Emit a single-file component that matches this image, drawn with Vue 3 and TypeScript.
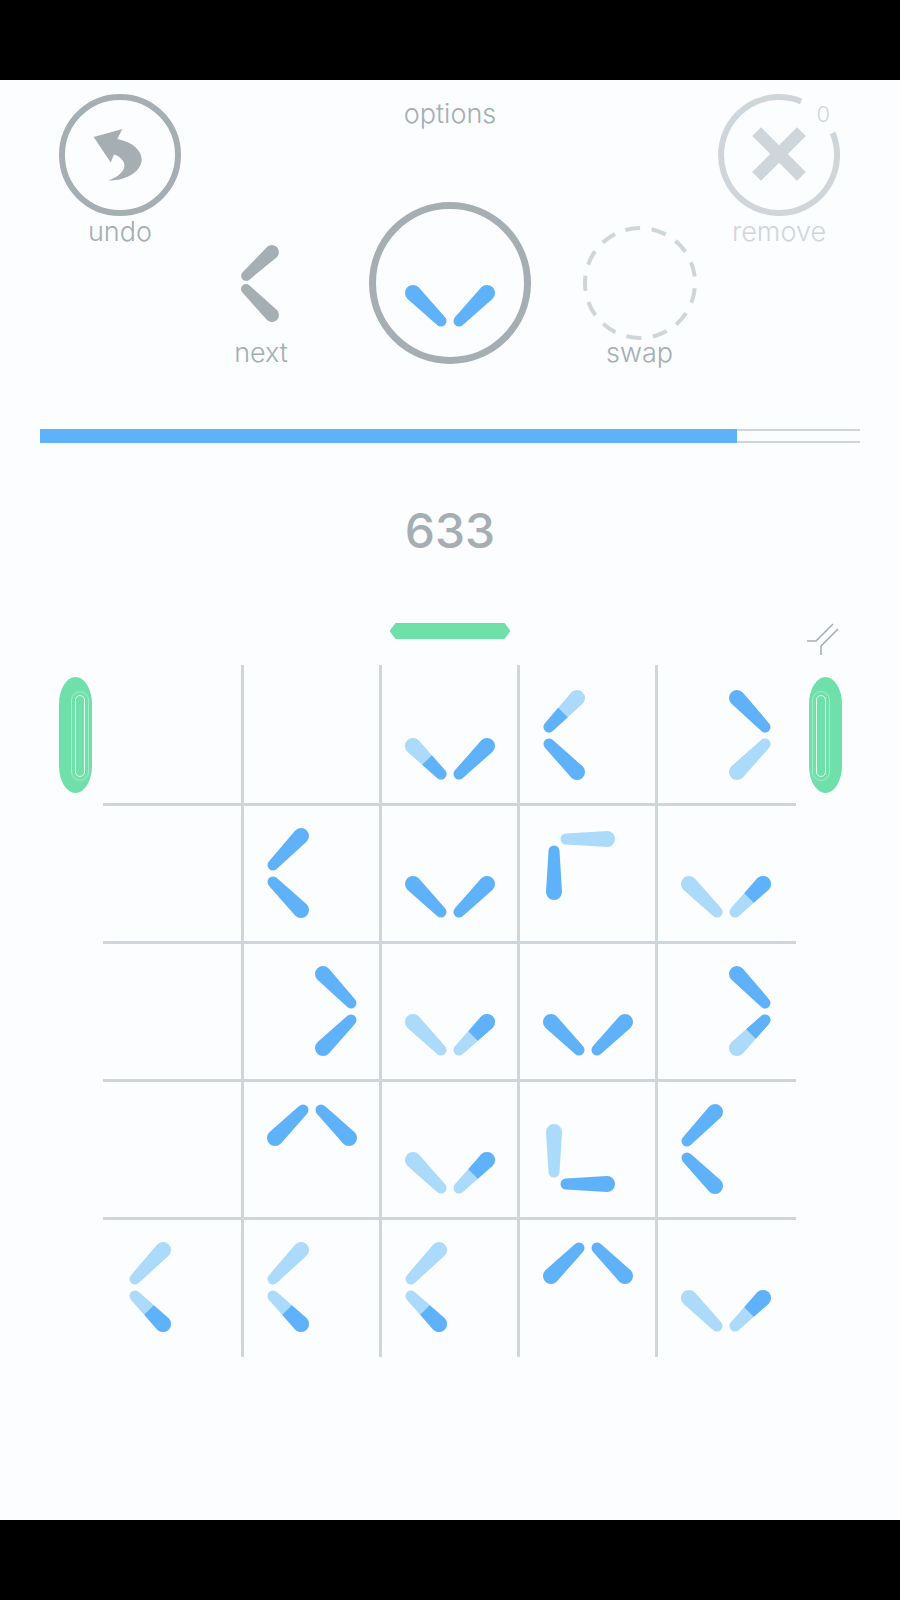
<script setup lang="ts">
type Point = [number, number]
type Tone = 'dark' | 'light' | 'smallDark' | 'bigDark'
type ShapeName = 'left' | 'right' | 'down' | 'up' | 'cornerTop' | 'cornerBottom'

const DARK = '#5fb2fa'
const LIGHT = '#abdafb'

// every stroke runs from its thin end to its thick end
const shapes: Record<ShapeName, [Point, Point][]> = {
  left: [[[30, 61], [58, 32]], [[30, 78], [58, 106]]],
  right: [[[108, 61], [80, 32]], [[108, 78], [80, 106]]],
  down: [[[60, 108], [32, 80]], [[78, 108], [106, 80]]],
  up: [[[60, 30], [32, 58]], [[78, 30], [106, 58]]],
  cornerTop: [[[35, 47], [35, 88]], [[47, 35], [88, 35]]],
  cornerBottom: [[[35, 92], [35, 52]], [[47, 104], [88, 104]]],
}

function taper(a: Point, ra: number, b: Point, rb: number, round = true) {
  const len = Math.hypot(b[0] - a[0], b[1] - a[1])
  const nx = -(b[1] - a[1]) / len
  const ny = (b[0] - a[0]) / len
  const p = (q: Point, r: number, s: number) => `${(q[0] + nx * r * s).toFixed(2)} ${(q[1] + ny * r * s).toFixed(2)}`
  const tail = round ? `A${ra} ${ra} 0 0 0 ${p(a, ra, 1)}` : ''
  return `M${p(a, ra, 1)}L${p(b, rb, 1)}A${rb} ${rb} 0 0 0 ${p(b, rb, -1)}L${p(a, ra, -1)}${tail}Z`
}

function strokePaths(from: Point, to: Point, tone: Tone, thin = 5.5, thick = 8, dark = DARK, light = LIGHT) {
  if (tone === 'dark') return [{ d: taper(from, thin, to, thick), fill: dark }]
  if (tone === 'light') return [{ d: taper(from, thin, to, thick), fill: light }]
  const mid: Point = [(from[0] + to[0]) / 2, (from[1] + to[1]) / 2]
  const rm = (thin + thick) / 2
  const half = tone === 'bigDark' ? taper(mid, rm, to, thick, false) : taper(mid, rm, from, thin, false)
  return [{ d: taper(from, thin, to, thick), fill: light }, { d: half, fill: dark }]
}

function piecePaths(shape: ShapeName, tones: Tone[]) {
  return shapes[shape].flatMap((s, i) => strokePaths(s[0], s[1], tones[i]))
}

const board: ([ShapeName, Tone, Tone] | null)[][] = [
  [null, null, ['down', 'smallDark', 'dark'], ['left', 'smallDark', 'dark'], ['right', 'dark', 'light']],
  [null, ['left', 'dark', 'dark'], ['down', 'dark', 'dark'], ['cornerTop', 'dark', 'light'], ['down', 'light', 'bigDark']],
  [null, ['right', 'dark', 'dark'], ['down', 'light', 'bigDark'], ['down', 'dark', 'dark'], ['right', 'dark', 'smallDark']],
  [null, ['up', 'dark', 'dark'], ['down', 'light', 'bigDark'], ['cornerBottom', 'light', 'dark'], ['left', 'dark', 'dark']],
  [['left', 'light', 'bigDark'], ['left', 'light', 'bigDark'], ['left', 'light', 'bigDark'], ['up', 'dark', 'dark'], ['down', 'light', 'bigDark']],
]

const cells = board.flatMap((row, r) =>
  row.map((piece, c) => ({
    key: `${r}-${c}`,
    lastCol: c === 4,
    lastRow: r === 4,
    viewBox: `${c === 0 ? -2 : 1} ${r === 0 ? -1 : 2} 138 138`,
    paths: piece ? piecePaths(piece[0], [piece[1], piece[2]]) : [],
  })),
)

const currentPaths = piecePaths('down', ['dark', 'dark'])
const nextPaths = [
  ...strokePaths([10, 36], [36, 12], 'dark', 5, 7, '#a4aeb3'),
  ...strokePaths([10, 49], [36, 75], 'dark', 5, 7, '#a4aeb3'),
]

const progress = (737 - 40) / 820
</script>

<template>
  <div class="screen">
    <div class="bar"></div>

    <div class="game">
      <!-- top buttons -->
      <div class="actions">
        <div class="action undo">
          <svg width="122" height="122" viewBox="0 0 122 122">
            <circle cx="61" cy="61" r="58" fill="none" stroke="#a4aeb3" stroke-width="6" />
            <path
              d="M34.7 43L63.3 35L58.3 45C74 48 83 57 82.7 66C82 78 66 87 49.3 86.5C60 83 66 76 65.5 71C65 66 60 62 55 60.5L51.7 68.5Z"
              fill="#a4aeb3"
            />
          </svg>
          <span class="label">undo</span>
        </div>

        <div class="action next">
          <svg width="50" height="85" viewBox="0 0 50 85">
            <path v-for="(p, i) in nextPaths" :key="i" :d="p.d" :fill="p.fill" />
          </svg>
          <span class="label">next</span>
        </div>

        <div class="action current">
          <span class="label">options</span>
          <svg class="current-ring" width="162" height="162" viewBox="0 0 162 162">
            <circle cx="81" cy="81" r="77.5" fill="none" stroke="#a4aeb3" stroke-width="7" />
            <g transform="translate(12 11)">
              <path v-for="(p, i) in currentPaths" :key="i" :d="p.d" :fill="p.fill" />
            </g>
          </svg>
        </div>

        <div class="action swap">
          <svg width="114" height="114" viewBox="0 0 114 114">
            <circle
              cx="57"
              cy="57"
              r="55"
              fill="none"
              stroke="#cfd6db"
              stroke-width="4"
              stroke-dasharray="15 11.58"
              transform="rotate(-105.5 57 57)"
            />
          </svg>
          <span class="label">swap</span>
        </div>

        <div class="action remove">
          <div class="remove-icon">
            <svg width="122" height="122" viewBox="0 0 122 122">
              <path d="M114.7 39A58 58 0 1 1 83.1 7.4" fill="none" stroke="#cfd6db" stroke-width="6" />
              <path d="M38.6 37.6L83.4 82.4M83.4 37.6L38.6 82.4" fill="none" stroke="#cfd6db" stroke-width="12.5" />
            </svg>
            <span class="count">0</span>
          </div>
          <span class="label">remove</span>
        </div>
      </div>

      <!-- progress -->
      <div class="progress">
        <div class="progress-fill" :style="{ width: progress * 100 + '%' }"></div>
      </div>

      <div class="score">633</div>

      <div class="board-head">
        <div class="hex"></div>
        <svg class="swap-mark" width="34" height="34" viewBox="0 0 34 34">
          <path d="M2 18H11L28 1M16 32V23L33 6" fill="none" stroke="#a4aeb3" stroke-width="1.6" />
        </svg>
      </div>

      <div class="board-row">
        <div class="pill pill-left">
          <div class="pill-outer"><div class="pill-inner"></div></div>
        </div>

        <div class="board">
          <div
            v-for="cell in cells"
            :key="cell.key"
            class="cell"
            :class="{ 'last-col': cell.lastCol, 'last-row': cell.lastRow }"
          >
            <svg v-if="cell.paths.length" width="138" height="138" :viewBox="cell.viewBox">
              <path v-for="(p, i) in cell.paths" :key="i" :d="p.d" :fill="p.fill" />
            </svg>
          </div>
        </div>

        <div class="pill pill-right">
          <div class="pill-outer"><div class="pill-inner"></div></div>
        </div>
      </div>
    </div>

    <div class="bar"></div>
  </div>
</template>

<style>
html,
body {
  margin: 0;
  background: #000;
}
</style>

<style scoped>
.screen {
  width: 900px;
  height: 1600px;
  display: flex;
  flex-direction: column;
  font-family: Inter, "Liberation Sans", sans-serif;
  overflow: hidden;
}

.bar {
  height: 80px;
  flex: none;
  background: #000;
}

.game {
  flex: 1;
  background: #fbfdff;
  display: flex;
  flex-direction: column;
}

.actions {
  height: 349px;
  display: grid;
  grid-template-columns: 240px 42px 336px 43px 236px;
}

.action {
  display: flex;
  flex-direction: column;
  align-items: center;
}

.action svg {
  display: block;
  flex: none;
}

.label {
  font-size: 27px;
  font-weight: 300;
  line-height: 34px;
  color: #a4aeb3;
}

.undo {
  padding-top: 14px;
}

.undo .label {
  margin-top: -1px;
}

.next {
  padding-top: 160px;
}

.next .label {
  margin-top: 11px;
}

.current {
  padding-top: 17px;
}

.current-ring {
  margin-top: 71px;
}

.swap {
  padding-top: 146px;
}

.swap .label {
  margin-top: -4px;
}

.remove {
  padding-top: 14px;
}

.remove .label {
  margin-top: -1px;
  color: #cfd6db;
}

.remove-icon {
  position: relative;
}

.count {
  position: absolute;
  top: 6px;
  right: 10px;
  font-size: 22px;
  font-weight: 300;
  line-height: 28px;
  color: #cfd6db;
}

.progress {
  margin: 0 40px;
  height: 14px;
  box-sizing: border-box;
  border-top: 2px solid #cfd6db;
  border-bottom: 2px solid #cfd6db;
  position: relative;
}

.progress-fill {
  position: absolute;
  left: 0;
  top: -2px;
  bottom: -2px;
  background: #5fb2fa;
}

.score {
  margin-top: 64px;
  text-align: center;
  font-size: 48px;
  font-weight: 500;
  line-height: 48px;
  color: #a4aeb3;
}

.board-head {
  margin-top: 68px;
  height: 42px;
  position: relative;
  display: flex;
  justify-content: center;
}

.hex {
  width: 121px;
  height: 16px;
  background: #70e0ab;
  clip-path: polygon(6px 0, 115px 0, 100% 50%, 115px 100%, 6px 100%, 0 50%);
}

.swap-mark {
  position: absolute;
  left: 805px;
  top: 0;
}

.board-row {
  display: flex;
  align-items: flex-start;
  padding-left: 59px;
}

.pill {
  width: 33px;
  height: 116px;
  margin-top: 12px;
  flex: none;
  border-radius: 16.5px / 27px;
  background: #70e0ab;
  display: flex;
  box-sizing: border-box;
  padding-top: 14px;
}

.pill-left {
  justify-content: flex-start;
  padding-left: 12px;
}

.pill-right {
  margin-left: 13px;
  padding-left: 3px;
}

.pill-outer {
  width: 18px;
  height: 90px;
  box-sizing: border-box;
  border: 1px solid rgba(255, 255, 255, 0.35);
  border-radius: 9px;
  padding: 3px 3px;
}

.pill-inner {
  height: 100%;
  box-sizing: border-box;
  border: 1.5px solid #e4fbf0;
  border-radius: 5px;
}

.board {
  margin-left: 11px;
  display: grid;
  grid-template-columns: 141px 138px 138px 138px 138px;
  grid-template-rows: 141px 138px 138px 138px 137px;
}

.cell {
  box-sizing: border-box;
  border-right: 3px solid #cfd6db;
  border-bottom: 3px solid #cfd6db;
}

.cell svg {
  display: block;
  overflow: visible;
}

.cell.last-col {
  border-right: none;
}

.cell.last-row {
  border-bottom: none;
}
</style>
